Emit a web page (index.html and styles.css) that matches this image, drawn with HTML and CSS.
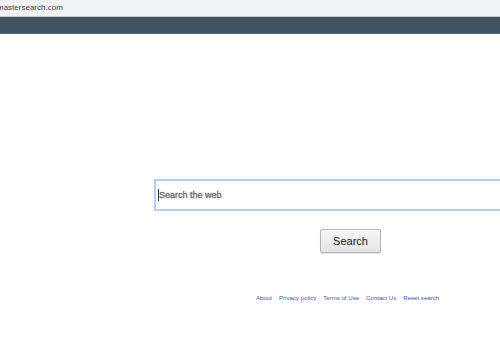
FILE: index.html
```html
<!DOCTYPE html>
<html>
<head>
<meta charset="utf-8">
<link rel="stylesheet" href="styles.css">
</head>
<body>
<div class="urlbar"><span class="url">mastersearch.com</span></div>
<div class="navbar"></div>
<main class="main">
  <div class="search-row">
    <div class="search-box"><span class="caret"></span><span class="placeholder">Search the web</span></div>
  </div>
  <div class="button-row">
    <button class="search-btn">Search</button>
  </div>
  <nav class="footer">
    <a href="#">About</a>
    <a href="#">Privacy policy</a>
    <a href="#">Terms of Use</a>
    <a href="#">Contact Us</a>
    <a href="#">Reset search</a>
  </nav>
</main>
</body>
</html>
```
FILE: styles.css
```css
html, body { margin: 0; padding: 0; background: #fff; overflow: hidden; }
body { width: 500px; height: 350px; font-family: "Liberation Sans", Arial, sans-serif; }
.urlbar {
  height: 16px;
  background: #f0f1f3;
  border-bottom: 1px solid #c8cacd;
  display: flex;
  align-items: center;
  overflow: hidden;
}
.url { font-family: "Liberation Sans", Arial, sans-serif; font-size: 8px; color: #444; margin-left: -3px; line-height: 16px; white-space: nowrap; }
.navbar {
  height: 16px;
  background: #405260;
  border-bottom: 1px solid #56636d;
}
.main { padding-top: 145px; }
.search-row { display: flex; padding-left: 154px; }
.search-box {
  flex: 1;
  height: 28px;
  border: 2px solid #b9cdf2;
  border-right: none;
  display: flex;
  align-items: center;
  padding-left: 2px;
}
.caret { width: 1px; height: 12px; background: #333; margin-right: 0; }
.placeholder { font-size: 9px; font-weight: normal; color: #666; -webkit-text-stroke: 0.3px #666; }
.button-row { display: flex; padding-left: 320px; margin-top: 18px; }
.search-btn {
  width: 61px;
  height: 24px;
  border: 1px solid #b4b4b4;
  border-radius: 2px;
  background: linear-gradient(#f6f6f6, #e4e4e4);
  font-family: "Liberation Sans", Arial, sans-serif;
  font-size: 11px;
  color: #222;
  padding: 0;
  box-shadow: 0 1px 1px rgba(0,0,0,0.12);
}
.footer { display: flex; gap: 7px; padding-left: 256px; margin-top: 41px; }
.footer a { font-size: 6.1px; line-height: 8px; color: #42569f; text-decoration: none; }
```
